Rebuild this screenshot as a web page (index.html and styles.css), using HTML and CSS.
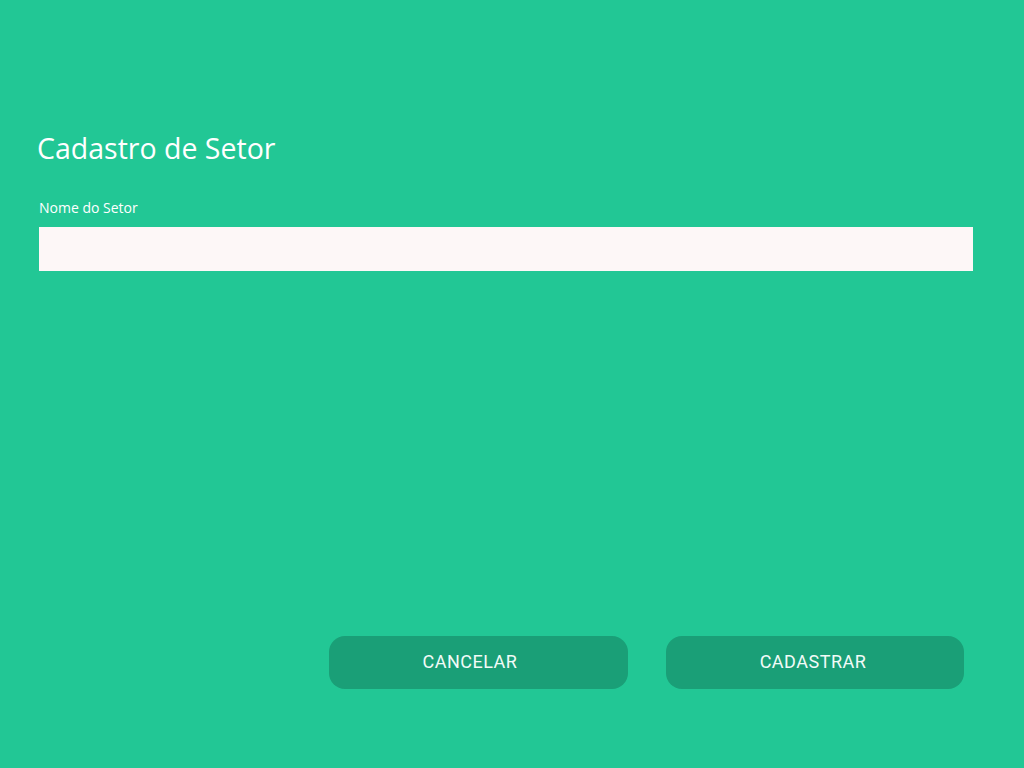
FILE: index.html
```html
<!DOCTYPE html>
<html lang="pt">
<head>
<meta charset="utf-8">
<title>Cadastro de Setor</title>
<link rel="stylesheet" href="styles.css">
</head>
<body>
<main class="page">
  <h1 class="title">Cadastro de Setor</h1>
  <label class="label" for="nome">Nome do Setor</label>
  <input class="input" id="nome" type="text">
  <div class="spacer"></div>
  <div class="actions">
    <button class="btn btn-cancel">CANCELAR</button>
    <button class="btn btn-submit">CADASTRAR</button>
  </div>
</main>
</body>
</html>
```
FILE: styles.css
```css
html, body {
  margin: 0;
  height: 100%;
}
body {
  background: #22c795;
  font-family: "Open Sans", "Noto Sans", sans-serif;
  color: #ffffff;
}
.page {
  height: 768px;
  box-sizing: border-box;
  display: flex;
  flex-direction: column;
  padding: 126px 51px 79px 39px;
}
.title {
  margin: 0 0 0 -2px;
  font-weight: 400;
  font-size: 28.5px;
  line-height: 44px;
  letter-spacing: 0;
}
.label {
  margin-top: 28px;
  font-size: 14px;
  line-height: 20px;
  letter-spacing: 0;
}
.input {
  margin-top: 9px;
  height: 44px;
  box-sizing: border-box;
  border: none;
  background: #fdf7f7;
  width: 934px;
  padding: 0 8px;
  outline: none;
}
.spacer {
  flex: 1;
}
.actions {
  display: flex;
  justify-content: flex-end;
  gap: 38px;
  padding-right: 9px;
}
.btn {
  width: 299px;
  height: 53px;
  border: none;
  border-radius: 16px;
  background: #1a9f77;
  color: #f2fbf7;
  font-family: Roboto, "Liberation Sans", sans-serif;
  font-size: 18px;
  letter-spacing: 0.5px;
  padding-top: 0;
  padding-bottom: 3px;
}
.btn-cancel {
  padding-right: 23px;
}
.btn-submit {
  width: 298px;
  padding-right: 10px;
}
```
